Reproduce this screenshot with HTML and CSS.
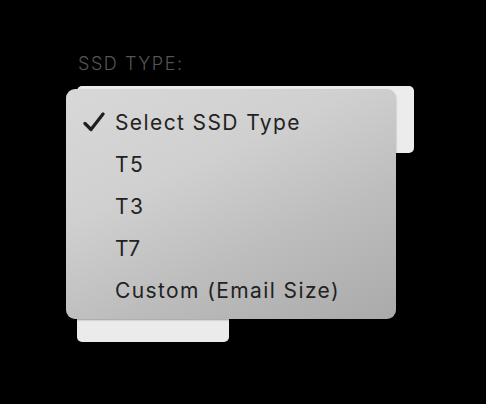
FILE: index.html
```html
<!DOCTYPE html>
<html>
<head>
<meta charset="utf-8">
<link rel="stylesheet" href="styles.css">
</head>
<body>
<div class="form">
  <div class="label">SSD TYPE:</div>
  <div class="field">
    <div class="select"></div>
    <div class="menu">
      <div class="item"><span class="check"><svg width="22" height="20" viewBox="0 0 22 20"><path d="M2 11.5 L8 17.5 L20 2" fill="none" stroke="#1e1e1e" stroke-width="3.2" stroke-linecap="round" stroke-linejoin="round"/></svg></span>Select SSD Type</div>
      <div class="item"><span class="check"></span>T5</div>
      <div class="item"><span class="check"></span>T3</div>
      <div class="item"><span class="check"></span>T7</div>
      <div class="item"><span class="check"></span>Custom (Email Size)</div>
    </div>
  </div>
  <div class="second"></div>
</div>
</body>
</html>
```
FILE: styles.css
```css
html, body {
  margin: 0;
  padding: 0;
  background: #000;
  width: 486px;
  height: 404px;
  overflow: hidden;
}
.form {
  padding: 54px 0 0 78px;
  display: flex;
  flex-direction: column;
  align-items: flex-start;
}
.label {
  font-family: "Inter", "Liberation Sans", sans-serif;
  font-weight: 300;
  font-size: 18px;
  letter-spacing: 1.55px;
  color: #555;
  line-height: 20px;
  height: 20px;
}
.field {
  position: relative;
  margin-top: 12px;
  margin-left: -1px;
}
.select {
  width: 337px;
  height: 67px;
  background: #ececec;
  border-radius: 5px;
}
.second {
  margin-top: 137px;
  margin-left: -1px;
  width: 152px;
  height: 52px;
  background: #ebebeb;
  border-radius: 5px;
}
.menu {
  position: absolute;
  left: -11px;
  top: 3px;
  width: 330px;
  height: 230px;
  border-radius: 9px;
  background: linear-gradient(155deg, #d8d8d8 0%, #d0d0d0 35%, #bdbdbd 65%, #aaaaaa 100%);
  box-shadow: 0 1px 2px rgba(0,0,0,0.35);
  box-sizing: border-box;
  padding-top: 12px;
  z-index: 2;
}
.item {
  display: flex;
  align-items: center;
  height: 42px;
  font-family: "Inter", "Liberation Sans", sans-serif;
  font-size: 21px;
  letter-spacing: 1.4px;
  color: #222;
  padding-left: 17px;
}
.check {
  width: 32px;
  display: flex;
  align-items: center;
}
```
